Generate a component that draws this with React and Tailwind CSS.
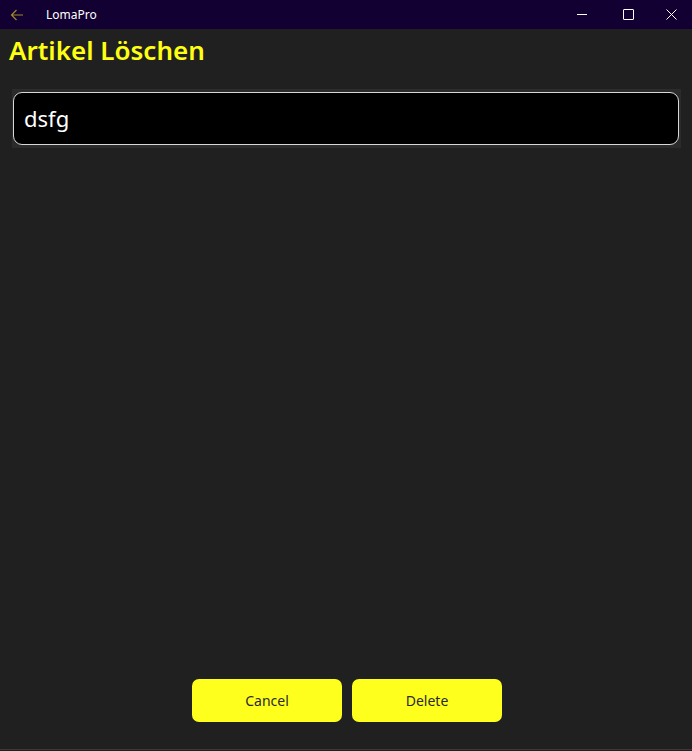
import React from "react";

export default function App() {
  return (
    <div
      className="w-[692px] h-[751px] bg-[#202020] flex flex-col overflow-hidden"
      style={{ fontFamily: '"Noto Sans", "Open Sans", sans-serif' }}
    >
      {/* Title bar */}
      <div className="h-[29px] bg-[#130032] flex items-center shrink-0">
        <div className="w-[32px] flex items-center justify-center pl-[1px]">
          <svg width="14" height="12" viewBox="0 0 14 12" fill="none" stroke="#9c8a2c" strokeWidth="1.2">
            <path d="M13 6H1.5M6.5 1L1.5 6l5 5" />
          </svg>
        </div>
        <span className="ml-[14px] text-[12px] text-white leading-none">LomaPro</span>
        <div className="ml-auto flex items-center h-full">
          <div className="w-[46px] h-full flex items-center justify-center">
            <div className="w-[10px] h-[1px] bg-white" />
          </div>
          <div className="w-[46px] h-full flex items-center justify-center">
            <div className="w-[11px] h-[11px] border border-white rounded-[1px]" />
          </div>
          <div className="w-[41px] h-full flex items-center justify-center">
            <svg width="11" height="11" viewBox="0 0 11 11" stroke="white" strokeWidth="1">
              <path d="M0.5 0.5l10 10M10.5 0.5l-10 10" />
            </svg>
          </div>
        </div>
      </div>

      {/* Heading */}
      <div className="pl-[9px] pt-[4px] h-[60px] shrink-0">
        <h1 className="text-[26px] font-semibold text-[#ffff14] leading-[34px]">Artikel Löschen</h1>
      </div>

      {/* Input */}
      <div className="mx-[12px] h-[59px] bg-[#2b2b2b] pl-[1px] pr-[2px] pt-[3px] shrink-0 w-[669px]">
        <div className="h-[53px] bg-black border border-[#d8d8d8] rounded-[9px] flex items-center pl-[10px]">
          <span className="text-[22px] text-white leading-none -mt-[2px]">dsfg</span>
        </div>
      </div>

      <div className="flex-1" />

      {/* Buttons */}
      <div className="flex justify-center gap-[10px] pb-[27px] pl-[2px]">
        <button className="w-[150px] h-[43px] bg-[#ffff1e] rounded-[7px] text-[14px] text-[#2a2a2a]">
          Cancel
        </button>
        <button className="w-[150px] h-[43px] bg-[#ffff1e] rounded-[7px] text-[14px] text-[#2a2a2a]">
          Delete
        </button>
      </div>
      <div className="h-[1px] bg-[#3a3a3a] shrink-0" />
      <div className="h-[1px] bg-[#202020] shrink-0" />
    </div>
  );
}
